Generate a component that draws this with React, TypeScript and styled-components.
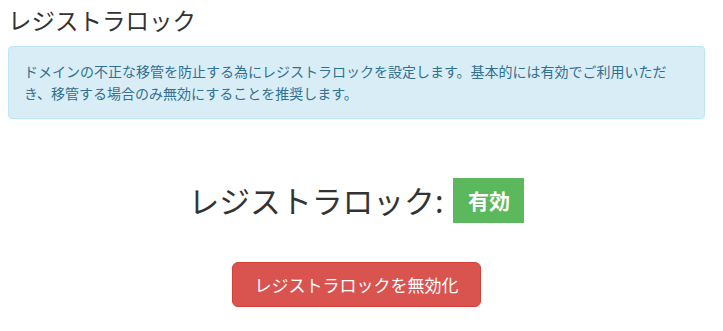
import React from "react";
import styled, { createGlobalStyle } from "styled-components";

const GlobalStyle = createGlobalStyle`
  body {
    margin: 0;
    background: #fff;
    font-family: "Noto Sans CJK JP", "Noto Sans", sans-serif;
    color: #333;
  }
`;

const Page = styled.div`
  width: 697px;
  padding: 0 8px;
`;

const Title = styled.h3`
  margin: 0;
  padding-top: 4px;
  font-size: 23.5px;
  font-weight: 400;
  line-height: 32px;
  color: #333;
`;

const Alert = styled.div`
  margin-top: 10px;
  padding: 13px 15px 14px;
  background: #d9edf7;
  border: 1px solid #bce8f1;
  border-radius: 4px;
  color: #31708f;
  font-size: 14px;
  line-height: 22px;
`;

const StatusRow = styled.div`
  display: flex;
  justify-content: center;
  align-items: center;
  gap: 10px;
  margin-top: 58px;
`;

const StatusText = styled.h2`
  margin: 0;
  font-size: 30.8px;
  font-weight: 400;
  line-height: 46px;
`;

const Label = styled.span<{ $color: string }>`
  display: inline-flex;
  align-items: center;
  justify-content: center;
  width: 71px;
  height: 45px;
  background: ${(p) => p.$color};
  color: #fff;
  font-size: 21px;
  font-weight: 700;
`;

const Actions = styled.div`
  display: flex;
  justify-content: center;
  margin-top: 39px;
`;

const Button = styled.button`
  width: 249px;
  height: 45px;
  background: #d9534f;
  border: 1px solid #d43f3a;
  border-radius: 6px;
  color: #fff;
  font-family: inherit;
  font-size: 17px;
  cursor: pointer;
`;

export default function App() {
  return (
    <Page>
      <GlobalStyle />
      <Title>レジストラロック</Title>
      <Alert>
        ドメインの不正な移管を防止する為にレジストラロックを設定します。基本的には有効でご利用いただき、移管する場合のみ無効にすることを推奨します。
      </Alert>
      <StatusRow>
        <StatusText>レジストラロック:</StatusText>
        <Label $color="#5cb85c">有効</Label>
      </StatusRow>
      <Actions>
        <Button>レジストラロックを無効化</Button>
      </Actions>
    </Page>
  );
}
